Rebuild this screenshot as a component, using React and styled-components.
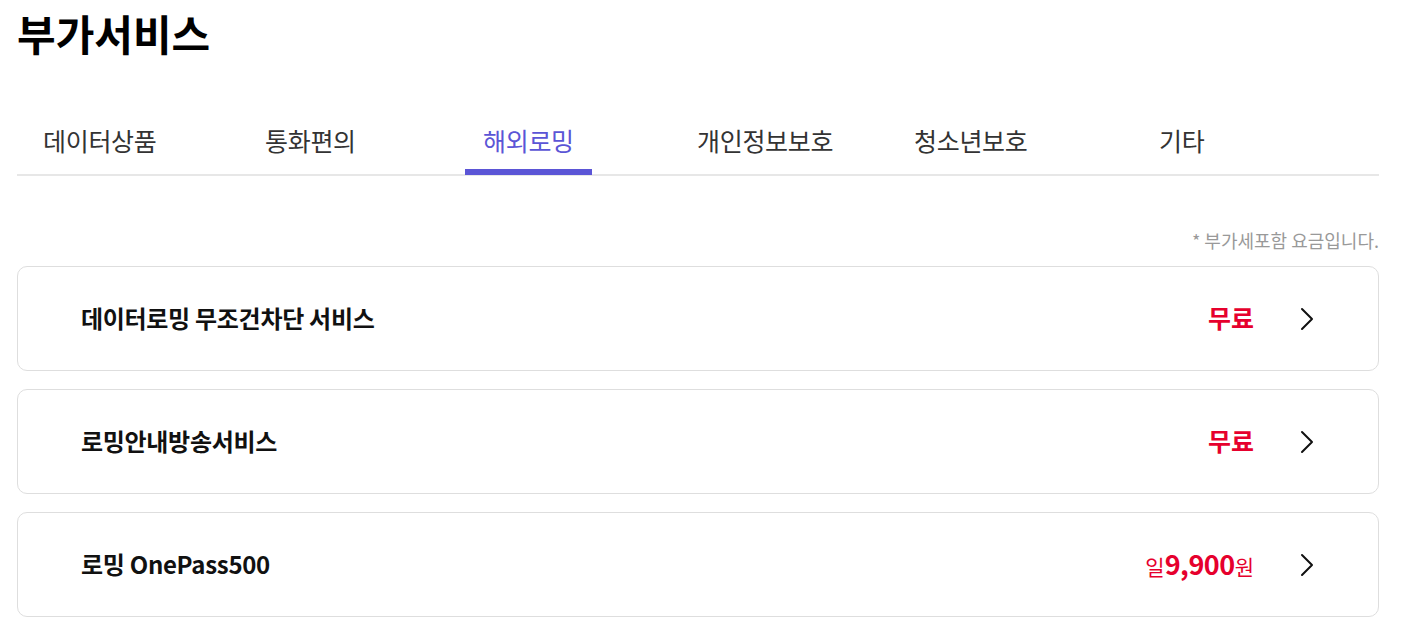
import React from 'react'
import styled, { createGlobalStyle } from 'styled-components'

const GlobalStyle = createGlobalStyle`
  body {
    margin: 0;
    background: #fff;
    font-family: "Noto Sans CJK KR", "Noto Sans", sans-serif;
    color: #111;
  }
`

export const Page = styled.div`
  padding: 0 28px 0 17px;
`
export const Title = styled.h1`
  margin: 0;
  padding-top: 8px;
  font-size: 42px;
  line-height: 50px;
  font-weight: 700;
  color: #000;
`
export const TabList = styled.div`
  display: flex;
  margin-top: 50px;
  padding-left: 8px;
  border-bottom: 2px solid #e7e7e7;
`
export const Tab = styled.div`
  width: ${props => props.w}px;
  height: 66px;
  display: flex;
  font-size: 25px;
  letter-spacing: -0.3px;
  color: ${props => (props.active ? '#5b55d6' : '#333')};
  cursor: pointer;
  span {
    position: relative;
    padding: 0 18px 3px;
    display: flex;
    align-items: center;
  }
  span::after {
    content: '';
    display: ${props => (props.active ? 'block' : 'none')};
    position: absolute;
    left: 0;
    right: 0;
    bottom: -1px;
    height: 6px;
    background: #5b55d6;
  }
`
export const Note = styled.p`
  margin: 52px 0 0;
  text-align: right;
  font-size: 18px;
  line-height: 24px;
  color: #999;
`
export const CardList = styled.div`
  display: flex;
  flex-direction: column;
  gap: 18px;
  margin-top: 14px;
`
export const Card = styled.div`
  box-sizing: border-box;
  height: 105px;
  border: 1px solid #dedede;
  border-radius: 10px;
  display: flex;
  align-items: center;
  padding: 0 64px 3px 63px;
  cursor: pointer;
`
export const CardTitle = styled.div`
  flex: 1;
  font-size: 24px;
  font-weight: 700;
  letter-spacing: -0.3px;
  color: #111;
`
export const Price = styled.div`
  color: #e6002d;
  font-size: 25px;
  font-weight: 700;
  display: flex;
  align-items: baseline;
`
export const PriceUnit = styled.span`
  font-size: 21px;
  font-weight: 400;
`
export const PriceNum = styled.span`
  font-size: 27px;
  font-weight: 700;
  letter-spacing: -0.5px;
`
export const Chevron = styled.svg`
  margin-left: 46px;
  margin-top: 3px;
  width: 14px;
  height: 24px;
  flex-shrink: 0;
`

const tabs = [
  { label: '데이터상품', w: 222 },
  { label: '통화편의', w: 218 },
  { label: '해외로밍', w: 214, active: true },
  { label: '개인정보보호', w: 217 },
  { label: '청소년보호', w: 245 },
  { label: '기타', w: 120 },
]

const Arrow = () => (
  <Chevron viewBox="0 0 14 24" fill="none">
    <polyline points="2,2 12,12 2,22" stroke="#111" strokeWidth="2" strokeLinecap="round" strokeLinejoin="round" />
  </Chevron>
)

const App = () => {
  return (
    <>
      <GlobalStyle />
      <Page>
        <Title>부가서비스</Title>
        <TabList>
          {tabs.map(t => (
            <Tab key={t.label} w={t.w} active={t.active}>
              <span>{t.label}</span>
            </Tab>
          ))}
        </TabList>
        <Note>* 부가세포함 요금입니다.</Note>
        <CardList>
          <Card>
            <CardTitle>데이터로밍 무조건차단 서비스</CardTitle>
            <Price>무료</Price>
            <Arrow />
          </Card>
          <Card>
            <CardTitle>로밍안내방송서비스</CardTitle>
            <Price>무료</Price>
            <Arrow />
          </Card>
          <Card>
            <CardTitle>로밍 OnePass500</CardTitle>
            <Price>
              <PriceUnit>일</PriceUnit>
              <PriceNum>9,900</PriceNum>
              <PriceUnit>원</PriceUnit>
            </Price>
            <Arrow />
          </Card>
        </CardList>
      </Page>
    </>
  )
}

export default App
